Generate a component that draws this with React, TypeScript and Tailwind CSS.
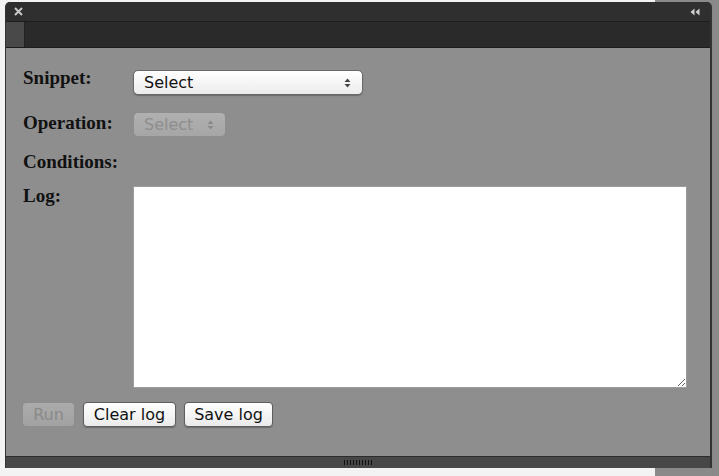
import React from 'react'

const labelCls =
    "w-[110px] shrink-0 font-['Liberation_Serif',serif] font-bold text-[19px] leading-[19px] text-[#111]"

const uiFont = "font-['DejaVu_Sans','Liberation_Sans',sans-serif]"

function Arrows({ disabled }: { disabled?: boolean }) {
    const c = disabled ? '#8a8a8a' : '#444'
    return (
        <svg width="7" height="10" viewBox="0 0 7 10">
            <path d="M3.5 0.5 L6.5 4 L0.5 4 Z" fill={c} />
            <path d="M3.5 9.5 L6.5 6 L0.5 6 Z" fill={c} />
        </svg>
    )
}

function SelectBox({ width, disabled }: { width: string; disabled?: boolean }) {
    return (
        <div
            className={`${width} h-[25px] flex items-center justify-between pl-[10px] pr-[11px] rounded-[5px] border text-[16px] ${uiFont} ${
                disabled
                    ? 'border-[#8d8d8d] bg-[linear-gradient(#b0b0b0,#a6a6a6)] text-[#8e8e8e]'
                    : 'border-[#6a6a6a] bg-[linear-gradient(#ffffff,#ececec)] text-[#111] shadow-[0_1px_1px_rgba(0,0,0,0.25)]'
            }`}
        >
            <span>Select</span>
            <Arrows disabled={disabled} />
        </div>
    )
}

function Btn({ children, width, disabled }: { children: React.ReactNode; width: string; disabled?: boolean }) {
    return (
        <button
            className={`${width} h-[25px] flex items-center justify-center rounded-[4px] border text-[16px] ${uiFont} ${
                disabled
                    ? 'border-[#8d8d8d] bg-[linear-gradient(#ababab,#a2a2a2)] text-[#898989]'
                    : 'border-[#5e5e5e] bg-[linear-gradient(#ffffff,#eaeaea)] text-[#111] shadow-[0_1px_1px_rgba(0,0,0,0.25)]'
            }`}
        >
            {children}
        </button>
    )
}

export default function App() {
    return (
        <div className="w-[719px] h-[476px] overflow-hidden pt-[2px] pl-[5px] bg-[linear-gradient(to_right,#f3f3f3_655px,#8a8a8a_655px)]">
            <div className="w-[707px] h-[466px] flex flex-col rounded-t-[5px] overflow-hidden border-l border-r-2 border-[#333] bg-[#2e2e2e]">
                {/* title bar */}
                <div className="h-[20px] shrink-0 flex items-center justify-between pl-[8px] pr-[10px] bg-[#2f2f2f] border-b border-[#1e1e1e]">
                    <svg width="9" height="9" viewBox="0 0 9 9">
                        <path d="M1 1 L8 8 M8 1 L1 8" stroke="#c8c8c8" strokeWidth="2" />
                    </svg>
                    <svg width="10" height="8" viewBox="0 0 10 8">
                        <path d="M0.5 4 L4.5 0.5 L4.5 7.5 Z" fill="#d0d0d0" />
                        <path d="M5.5 4 L9.5 0.5 L9.5 7.5 Z" fill="#d0d0d0" />
                    </svg>
                </div>

                {/* tab strip */}
                <div className="h-[26px] shrink-0 flex bg-[#2a2a2a] border-b border-[#1c1c1c]">
                    <div className="w-[19px] h-full bg-[#494949] border-r border-[#222]" />
                </div>

                {/* content */}
                <div className="flex-1 flex flex-col bg-[#8e8e8e] pt-[22px] pl-[17px]">
                    <div className="flex items-start">
                        <div className={`${labelCls} mt-[-2px]`}>Snippet:</div>
                        <SelectBox width="w-[230px]" />
                    </div>
                    <div className="flex items-start mt-[17px]">
                        <div className={`${labelCls} mt-[1px]`}>Operation:</div>
                        <SelectBox width="w-[93px]" disabled />
                    </div>
                    <div className="flex items-start mt-[15px]">
                        <div className={labelCls}>Conditions:</div>
                    </div>
                    <div className="flex items-start mt-[15px]">
                        <div className={labelCls}>Log:</div>
                        <textarea className="w-[554px] h-[202px] bg-white border border-[#9c9c9c] outline-none" />
                    </div>
                    <div className="flex gap-[8px] mt-[14px] ml-[-1px]">
                        <Btn width="w-[53px]" disabled>
                            Run
                        </Btn>
                        <Btn width="w-[93px]">Clear log</Btn>
                        <Btn width="w-[89px]">Save log</Btn>
                    </div>
                </div>

                {/* bottom bar */}
                <div className="h-[12px] shrink-0 flex items-center justify-center border-t border-[#2c2c2c] bg-[#474747]">
                    <div className="flex gap-[2px]">
                        {Array.from({ length: 10 }).map((_, i) => (
                            <div key={i} className="w-[1px] h-[5px] bg-[#111]" />
                        ))}
                    </div>
                </div>
            </div>
        </div>
    )
}
